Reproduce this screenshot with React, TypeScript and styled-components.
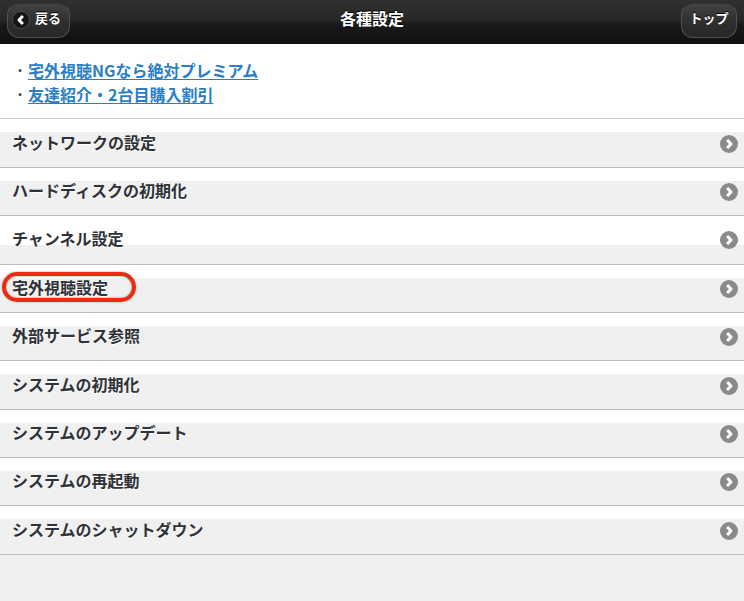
import React from "react";
import styled, { createGlobalStyle } from "styled-components";

const Global = createGlobalStyle`
  html, body { margin: 0; padding: 0; background: #f0f0f0; }
  body { font-family: "Noto Sans CJK JP", "Liberation Sans", sans-serif; }
`;

const Page = styled.div`
  width: 744px;
  height: 601px;
  overflow: hidden;
  background: #f0f0f0;
  display: flex;
  flex-direction: column;
`;

const Header = styled.header`
  height: 44px;
  flex: none;
  display: flex;
  align-items: center;
  justify-content: space-between;
  padding: 0 7px 6px;
  box-sizing: border-box;
  position: relative;
  background: linear-gradient(#303030 0%, #272727 45%, #1a1a1a 55%, #0f0f0f 100%);
`;

const Title = styled.h1`
  position: absolute;
  left: 0;
  right: 0;
  top: 8px;
  margin: 0;
  text-align: center;
  font-size: 16px;
  line-height: 20px;
  font-weight: 700;
  color: #fff;
  text-shadow: 0 -1px 0 #000;
`;

const NavButton = styled.button<{ $w: number; $icon?: boolean }>`
  width: ${(p) => p.$w}px;
  height: 35px;
  box-sizing: border-box;
  margin-top: 3px;
  display: flex;
  align-items: center;
  justify-content: ${(p) => (p.$icon ? "flex-start" : "center")};
  gap: 5px;
  padding: 0 0 5px ${(p) => (p.$icon ? "4px" : "0")};
  border: 1px solid #505050;
  border-top-color: #333;
  border-radius: 12px;
  background: linear-gradient(#424242, #303030 50%, #272727);
  color: #fff;
  font-family: inherit;
  font-size: 13px;
  line-height: 16px;
  font-weight: 700;
  text-shadow: 0 -1px 0 #000;
`;

const BackCircle = styled.svg`
  width: 18px;
  height: 18px;
  margin-top: 4px;
  flex: none;
`;

const Promo = styled.section`
  height: 75px;
  flex: none;
  box-sizing: border-box;
  padding-top: 14px;
  background: #fff;
  border-bottom: 1px solid #c8c8c8;
`;

const PromoRow = styled.div`
  display: flex;
  align-items: center;
  height: 24px;
  padding-left: 12px;
  font-size: 16px;
  font-weight: 700;
  color: #333;
`;

const Dot = styled.span`
  width: 16px;
  flex: none;
  font-weight: 700;
  font-size: 11px;
  text-align: center;
`;

const PromoLink = styled.a`
  color: #2a7ec7;
  text-decoration: underline;
  text-underline-offset: 2px;
  line-height: 20px;
`;

const List = styled.ul`
  list-style: none;
  margin: 0;
  padding: 0.45px 0 0;
`;

const Row = styled.li<{ $split: number }>`
  height: 48.375px;
  box-sizing: border-box;
  border-bottom: 1px solid #bdbdbd;
  display: flex;
  align-items: center;
  justify-content: space-between;
  padding: 0 6px 0 12px;
  position: relative;
  background: linear-gradient(#fff ${(p) => p.$split}px, #f0f0f0 ${(p) => p.$split}px);
`;

const Label = styled.span`
  font-size: 16px;
  line-height: 20px;
  font-weight: 700;
  color: #2f3338;
  margin-top: -3px;
  text-shadow: 0 1px 0 #fff;
`;

const Arrow = styled.svg`
  width: 18px;
  height: 18px;
  flex: none;
  margin-top: 1px;
`;

const Highlight = styled.span`
  position: absolute;
  left: 2px;
  top: 7px;
  width: 134px;
  height: 30px;
  box-sizing: border-box;
  border: 4px solid #ee2a10;
  border-radius: 15px;
  box-shadow: inset 0 0 2px #777, 0 0 2px #999;
`;

const rows = [
  { label: "ネットワークの設定", split: 13 },
  { label: "ハードディスクの初期化", split: 13 },
  { label: "チャンネル設定", split: 29 },
  { label: "宅外視聴設定", split: 13, mark: true },
  { label: "外部サービス参照", split: 13 },
  { label: "システムの初期化", split: 13 },
  { label: "システムのアップデート", split: 13 },
  { label: "システムの再起動", split: 13 },
  { label: "システムのシャットダウン", split: 13 },
];

export default function App() {
  return (
    <Page>
      <Global />
      <Header>
        <NavButton $w={63} $icon>
          <BackCircle viewBox="0 0 18 18">
            <circle cx="9" cy="9" r="8.5" fill="#161616" stroke="#4a4a4a" strokeWidth="1" />
            <path d="M10.9 5 L7 9 L10.9 13" fill="none" stroke="#fff" strokeWidth="3" strokeLinejoin="round" />
          </BackCircle>
          戻る
        </NavButton>
        <Title>各種設定</Title>
        <NavButton $w={56}>トップ</NavButton>
      </Header>
      <Promo>
        <PromoRow>
          <Dot>・</Dot>
          <PromoLink href="#">宅外視聴NGなら絶対プレミアム</PromoLink>
        </PromoRow>
        <PromoRow>
          <Dot>・</Dot>
          <PromoLink href="#">友達紹介・2台目購入割引</PromoLink>
        </PromoRow>
      </Promo>
      <List>
        {rows.map((r) => (
          <Row key={r.label} $split={r.split}>
            <Label>{r.label}</Label>
            <Arrow viewBox="0 0 18 18">
              <circle cx="9" cy="9" r="9" fill="#8a8a8a" />
              <path d="M7.1 5 L11 9 L7.1 13" fill="none" stroke="#fff" strokeWidth="3" strokeLinejoin="round" />
            </Arrow>
            {r.mark && <Highlight />}
          </Row>
        ))}
      </List>
    </Page>
  );
}
